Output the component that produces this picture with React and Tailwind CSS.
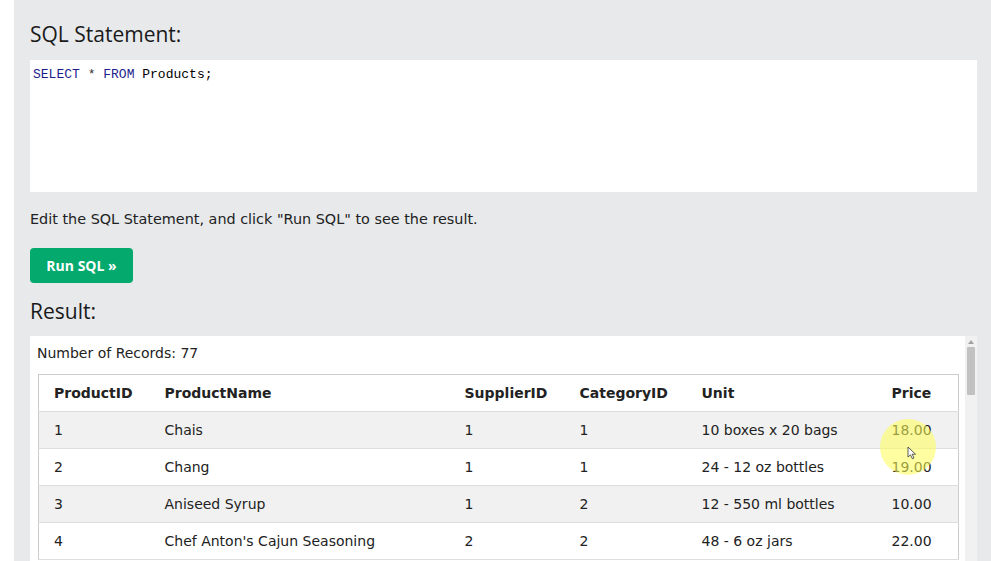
import React from 'react';

const rows = [
  { id: 1, name: 'Chais', sup: 1, cat: 1, unit: '10 boxes x 20 bags', price: '18.00' },
  { id: 2, name: 'Chang', sup: 1, cat: 1, unit: '24 - 12 oz bottles', price: '19.00' },
  { id: 3, name: 'Aniseed Syrup', sup: 1, cat: 2, unit: '12 - 550 ml bottles', price: '10.00' },
  { id: 4, name: "Chef Anton's Cajun Seasoning", sup: 2, cat: 2, unit: '48 - 6 oz jars', price: '22.00' },
];

function App() {
  return (
    <div className="h-[561px] w-[991px] overflow-hidden bg-white flex">
      <div className="w-[14px] shrink-0 bg-white" />
      <div className="flex-1 bg-[#e7e9eb] px-[16px] pt-[18px] text-black relative">
        <h2 className="text-[21px] leading-[32px] font-['Open_Sans',sans-serif] text-[#1a1a1a] mb-[10px]">
          SQL Statement:
        </h2>
        <div className="mr-[-2px] h-[132px] bg-white px-[3px] pt-[6px] pb-[4px] font-['Liberation_Mono',monospace] text-[13px] leading-[18px]">
          <span className="text-[#1c1c8c]">SELECT</span> <span className="text-[#333]">*</span>{' '}
          <span className="text-[#1c1c8c]">FROM</span> Products;
        </div>
        <p className="mt-[18px] text-[14.4px] leading-[18px] font-['DejaVu_Sans',Verdana,sans-serif] text-[#222]">
          Edit the SQL Statement, and click "Run SQL" to see the result.
        </p>
        <button className="mt-[20px] h-[35px] w-[103px] rounded-[4px] bg-[#04AA6D] text-white font-bold text-[14px] font-['Open_Sans',sans-serif]">
          Run SQL »
        </button>
        <h2 className="mt-[12px] text-[21px] leading-[32px] font-['Open_Sans',sans-serif] text-[#1a1a1a]">
          Result:
        </h2>
        <div className="mt-[9px] mr-[-2px] bg-white flex h-[300px]">
          <div className="flex-1 pl-[7px] pr-[6px] pt-[7px] font-['DejaVu_Sans',Verdana,sans-serif] text-[14px] text-[#222]">
            <div className="leading-[20px]">Number of Records: 77</div>
            <table className="mt-[11px] ml-[1px] w-[921px] table-fixed border border-[#ccc] border-collapse">
              <colgroup>
                <col className="w-[111px]" />
                <col className="w-[300px]" />
                <col className="w-[115px]" />
                <col className="w-[122px]" />
                <col className="w-[190px]" />
                <col />
              </colgroup>
              <thead>
                <tr className="h-[37px] border-b border-[#ddd]">
                  {['ProductID', 'ProductName', 'SupplierID', 'CategoryID', 'Unit', 'Price'].map((h) => (
                    <th key={h} className="text-left font-bold pl-[15px] whitespace-nowrap">{h}</th>
                  ))}
                </tr>
              </thead>
              <tbody>
                {rows.map((r, i) => (
                  <tr key={r.id} className={`h-[37px] border-b border-[#ddd] ${i % 2 === 0 ? 'bg-[#f1f1f1]' : 'bg-white'}`}>
                    <td className="pl-[15px]">{r.id}</td>
                    <td className="pl-[15px] whitespace-nowrap">{r.name}</td>
                    <td className="pl-[15px]">{r.sup}</td>
                    <td className="pl-[15px]">{r.cat}</td>
                    <td className="pl-[15px] whitespace-nowrap">{r.unit}</td>
                    <td className="pl-[15px]">{r.price}</td>
                  </tr>
                ))}
              </tbody>
            </table>
          </div>
          <div className="w-[12px] bg-[#f1f1f1] flex flex-col items-center">
            <div className="mt-[4px] h-0 w-0 border-l-[3px] border-r-[3px] border-b-[4px] border-l-transparent border-r-transparent border-b-[#a3a3a3]" />
            <div className="mt-[3px] h-[48px] w-[8px] rounded-[1px] bg-[#c1c1c1]" />
          </div>
        </div>
        <div className="absolute left-[866px] top-[419px] h-[56px] w-[56px] rounded-full bg-[#ffff55]/55 pointer-events-none" />
        <svg className="absolute left-[893px] top-[446px]" width="10" height="14" viewBox="0 0 10 14">
          <path d="M1 1 L1 11 L3.5 8.8 L5.4 12.8 L7 12 L5.2 8.2 L8.5 8.2 Z" fill="white" stroke="#333" strokeWidth="0.8" />
        </svg>
      </div>
      <div className="w-[2px] shrink-0 bg-[#f4f4f4]" />
    </div>
  );
}

export default App;
